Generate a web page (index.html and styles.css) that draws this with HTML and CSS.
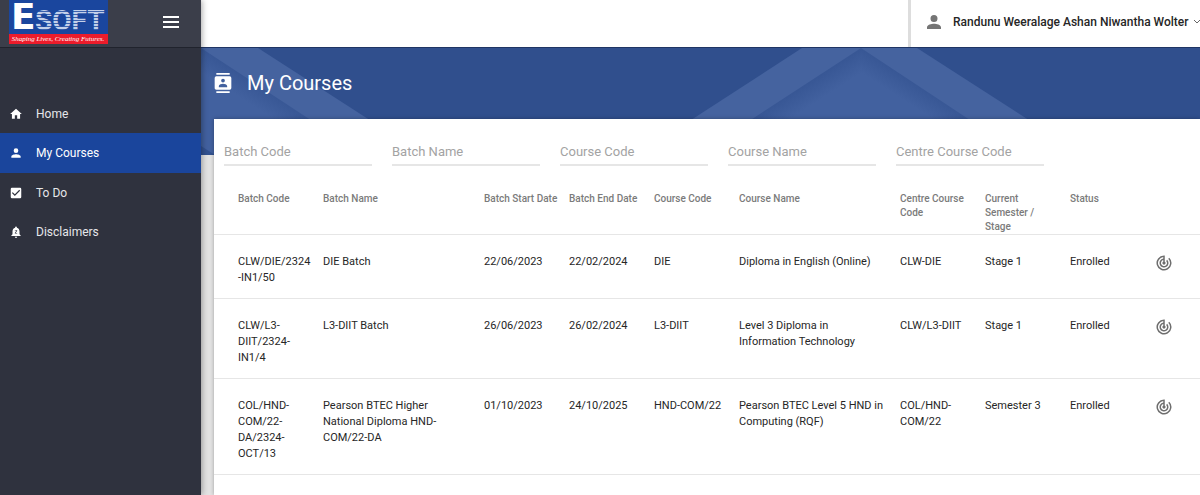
FILE: index.html
```html
<!DOCTYPE html>
<html lang="en">
<head>
<meta charset="utf-8">
<meta name="viewport" content="width=device-width, initial-scale=1">
<title>My Courses</title>
<link rel="stylesheet" href="styles.css">
</head>
<body>
<div class="app">
  <aside class="sidebar">
    <div class="brand">
      <svg class="logo" viewBox="0 0 99 44" role="img" aria-label="Esoft">
        <rect width="99" height="35" fill="#1a469e"/>
        <rect y="34" width="99" height="10" fill="#ec1c2b"/>
        <text class="logo-e" x="2" y="29">E</text>
        <text class="logo-soft" x="26" y="30">SOFT</text>
        <path d="M26 11.500H98M26 14.500H98M26 17.500H98M26 20.500H98M26 23.500H98M26 26.500H98M26 29.500H98" stroke="#1a469e" stroke-width="1" opacity=".8"/>
        <text class="logo-tag" x="49" y="41" text-anchor="middle">Shaping Lives, Creating Futures.</text>
      </svg>
      <button class="menu-button" type="button" aria-label="Toggle menu">
        <svg viewBox="0 0 16 12" width="16" height="12"><path d="M0 1h16M0 6h16M0 11h16" stroke="#fff" stroke-width="2"/></svg>
      </button>
    </div>
    <nav class="nav">
      <a class="nav-item" href="#home">
        <svg viewBox="0 0 24 24"><path d="M10 20v-6h4v6h5v-8h3L12 3 2 12h3v8z"/></svg>Home</a>
      <a class="nav-item active" href="#courses" aria-current="page">
        <svg viewBox="0 0 24 24"><path d="M12 12a4 4 0 1 0 0-8 4 4 0 0 0 0 8zm0 2c-2.700 0-8 1.300-8 4v2h16v-2c0-2.700-5.300-4-8-4z"/></svg>My Courses</a>
      <a class="nav-item" href="#todo">
        <svg viewBox="0 0 24 24"><path d="M19 3H5a2 2 0 0 0-2 2v14a2 2 0 0 0 2 2h14a2 2 0 0 0 2-2V5a2 2 0 0 0-2-2zm-9 14-5-5 1.400-1.400L10 14.200l7.600-7.600L19 8z"/></svg>To Do</a>
      <a class="nav-item" href="#disclaimers">
        <svg viewBox="0 0 24 24"><path fill-rule="evenodd" d="M12 22a2 2 0 0 0 2-2h-4a2 2 0 0 0 2 2zm6-6v-5c0-3.100-1.600-5.600-4.500-6.300V4a1.500 1.500 0 0 0-3 0v.7C7.600 5.400 6 7.900 6 11v5l-2 2v1h16v-1zM10 9h4v1l-2.500 3.500H14v1h-4v-1L12.500 10H10z"/></svg>Disclaimers</a>
    </nav>
  </aside>

  <div class="page">
    <header class="topbar">
      <button class="user" type="button">
        <svg class="user-icon" viewBox="4 4 16 16"><path d="M12 12a4 4 0 1 0 0-8 4 4 0 0 0 0 8zm0 2c-2.700 0-8 1.300-8 4v2h16v-2c0-2.700-5.300-4-8-4z"/></svg>
        <span class="user-name">Randunu Weeralage Ashan Niwantha Wolter</span>
        <svg class="chevron" viewBox="0 0 8 6"><path d="M1 1l3 3 3-3" fill="none" stroke="#666"/></svg>
      </button>
    </header>

    <main class="content">
      <div class="banner">
        <svg class="banner-art" viewBox="0 0 999 107" preserveAspectRatio="xMinYMin slice" aria-hidden="true">
          <defs>
            <linearGradient id="fade-left" gradientUnits="userSpaceOnUse" x1="54" y1="35" x2="43" y2="52"><stop offset="0" stop-color="#385795"/><stop offset="1" stop-color="#42619f"/></linearGradient>
            <linearGradient id="peak-left" gradientUnits="userSpaceOnUse" x1="606" y1="36" x2="617" y2="53"><stop offset="0" stop-color="#385795"/><stop offset="1" stop-color="#42619f"/></linearGradient>
            <linearGradient id="peak-right" gradientUnits="userSpaceOnUse" x1="715" y1="36" x2="704" y2="53"><stop offset="0" stop-color="#385795"/><stop offset="1" stop-color="#42619f"/></linearGradient>
          </defs>
          <path fill="#45639f" d="M0 0H57L223 107H0z"/>
          <path fill="url(#fade-left)" d="M0 0 163 107H0z"/>
          <path fill="#335290" d="M0 98 14 107H0z"/>
          <path fill="#45639f" d="M601 0H716L882 107H436z"/>
          <path fill="url(#peak-left)" d="M660 0V107H496z"/>
          <path fill="url(#peak-right)" d="M660 0 822 107H660z"/>
        </svg>
        <h1 class="title">
          <svg viewBox="0 0 24 24"><path fill-rule="evenodd" d="M20 0H4v2h16zM4 24h16v-2H4zM20 4H4a2 2 0 0 0-2 2v12c0 1.100.9 2 2 2h16a2 2 0 0 0 2-2V6a2 2 0 0 0-2-2zm-8 2.800a2.200 2.200 0 1 1 0 4.500 2.200 2.200 0 0 1 0-4.500zM17 17H7v-1.500c0-1.700 3.300-2.500 5-2.500s5 .8 5 2.500z"/></svg>
          My Courses
        </h1>
      </div>

      <section class="card">
        <form class="filters">
          <input type="text" placeholder="Batch Code" aria-label="Batch Code">
          <input type="text" placeholder="Batch Name" aria-label="Batch Name">
          <input type="text" placeholder="Course Code" aria-label="Course Code">
          <input type="text" placeholder="Course Name" aria-label="Course Name">
          <input type="text" placeholder="Centre Course Code" aria-label="Centre Course Code">
        </form>
        <table class="courses">
          <colgroup><col class="c-first"><col class="c-wide"><col class="c"><col class="c"><col class="c"><col class="c-wide"><col class="c"><col class="c"><col class="c"><col></colgroup>
          <thead>
            <tr><th>Batch Code</th><th>Batch Name</th><th>Batch Start Date</th><th>Batch End Date</th><th>Course Code</th><th>Course Name</th><th>Centre Course Code</th><th>Current Semester / Stage</th><th>Status</th><th aria-label="Track"></th></tr>
          </thead>
          <tbody>
            <tr><td>CLW/DIE/2324<br>-IN1/50</td><td>DIE Batch</td><td>22/06/2023</td><td>22/02/2024</td><td>DIE</td><td>Diploma in English (Online)</td><td>CLW-DIE</td><td>Stage 1</td><td>Enrolled</td><td><button class="track" type="button" aria-label="Track progress"><svg viewBox="0 0 24 24"><use href="#track"/></svg></button></td></tr>
            <tr><td>CLW/L3-<br>DIIT/2324-<br>IN1/4</td><td>L3-DIIT Batch</td><td>26/06/2023</td><td>26/02/2024</td><td>L3-DIIT</td><td>Level 3 Diploma in<br>Information Technology</td><td>CLW/L3-DIIT</td><td>Stage 1</td><td>Enrolled</td><td><button class="track" type="button" aria-label="Track progress"><svg viewBox="0 0 24 24"><use href="#track"/></svg></button></td></tr>
            <tr><td>COL/HND-<br>COM/22-<br>DA/2324-<br>OCT/13</td><td>Pearson BTEC Higher<br>National Diploma HND-<br>COM/22-DA</td><td>01/10/2023</td><td>24/10/2025</td><td>HND-COM/22</td><td>Pearson BTEC Level 5 HND in<br>Computing (RQF)</td><td>COL/HND-<br>COM/22</td><td>Semester 3</td><td>Enrolled</td><td><button class="track" type="button" aria-label="Track progress"><svg viewBox="0 0 24 24"><use href="#track"/></svg></button></td></tr>
          </tbody>
        </table>
      </section>
    </main>
  </div>
</div>
<svg class="symbols" aria-hidden="true"><symbol id="track" viewBox="0 0 24 24"><path d="M19.070 4.930l-1.410 1.410A8 8 0 1 1 11 4.070v2.020a6 6 0 1 0 5.240 1.670l-1.410 1.410A4 4 0 1 1 11 8.140v2.140a2 2 0 1 0 2 0V2h-1a10 10 0 1 0 7.070 2.930z"/></symbol></svg>
</body>
</html>
```
FILE: styles.css
```css
* { box-sizing: border-box; }
body {
  margin: 0;
  font-family: Roboto, "Liberation Sans", sans-serif;
  font-size: 12px;
  color: #262626;
  background: #e3e3e3;
}
button { border: 0; padding: 0; background: none; font: inherit; color: inherit; cursor: pointer; }
.app { display: flex; min-height: 100vh; }

.sidebar {
  flex: none;
  width: 201px;
  background: #2f323e;
  box-shadow: 1px 0 6px rgba(0, 0, 0, .35);
  z-index: 1;
}
.brand {
  display: flex;
  justify-content: space-between;
  align-items: flex-start;
  height: 48px;
  padding: 0 22px 0 9px;
  background: #3b3e4a;
  border-bottom: 1px solid #20232d;
}
.logo { width: 99px; height: 44px; overflow: visible; }
.logo text { fill: #fff; font-weight: 700; }
.logo .logo-e { font-family: "DejaVu Sans", sans-serif; font-size: 36px; }
.logo .logo-soft { font-family: Roboto, sans-serif; font-size: 28px; fill: #c3d0ea; }
.logo .logo-tag { font-family: "Liberation Serif", serif; font-style: italic; font-weight: 400; font-size: 7px; }
.menu-button { display: flex; padding: 16px 0 8px; }

.nav { padding-top: 46px; }
.nav-item {
  display: flex;
  align-items: center;
  gap: 13px;
  height: 39px;
  padding-left: 9px;
  color: #e6e7ea;
  text-decoration: none;
}
.nav-item svg { width: 14px; height: 14px; fill: #fff; }
.nav-item.active { height: 40px; background: #1a459c; color: #fff; }

.page { flex: 1; min-width: 0; display: flex; flex-direction: column; }
.topbar {
  display: flex;
  justify-content: flex-end;
  height: 48px;
  background: #fff;
  border-bottom: 1px solid #1f3564;
}
.user {
  display: flex;
  align-items: center;
  width: 292px;
  padding: 0 0 4px 16px;
  border-left: 3px solid #ddd;
  overflow: hidden;
}
.user-icon { flex: none; width: 14px; height: 14px; fill: #757575; }
.user-name { flex: none; margin: 0 4px 0 12px; font-weight: 500; white-space: nowrap; }
.chevron { flex: none; width: 8px; height: 6px; }

.content { flex: 1; display: flex; flex-direction: column; }
.banner { position: relative; height: 107px; background: #304f8d; overflow: hidden; }
.banner-art { position: absolute; inset: 0; width: 100%; height: 100%; }
.title {
  position: relative;
  display: flex;
  align-items: center;
  gap: 14px;
  margin: 0;
  padding: 23px 0 0 12px;
  font-size: 20px;
  line-height: 24px;
  font-weight: 400;
  color: #fff;
}
.title svg { width: 20px; height: 20px; fill: #fff; }

.card {
  position: relative;
  flex: 1;
  margin: -36px 0 0 13px;
  background: #fff;
  box-shadow: 0 0 4px rgba(0, 0, 0, .3);
}
.filters { display: flex; gap: 20px; padding: 20px 10px 0; }
.filters input {
  flex: 0 1 148px;
  min-width: 0;
  height: 27px;
  padding: 0;
  border: 0;
  border-bottom: 2px solid #e6e6e6;
  border-radius: 0;
  background: none;
  font: 13px/24px Roboto, "Liberation Sans", sans-serif;
}
.filters input::placeholder { color: #a3a3a3; opacity: 1; }

.courses {
  width: 100%;
  margin-top: 22px;
  border-collapse: separate;
  border-spacing: 0;
  table-layout: fixed;
}
.c-first { width: 109px; }
.c-wide { width: 161px; }
.c { width: 85px; }
.courses th, .courses td {
  padding: 0 8px 0 0;
  text-align: left;
  vertical-align: top;
  border-bottom: 1px solid #e6e6e6;
}
.courses th { padding: 4px 8px 0 0; font-size: 10px; line-height: 14px; font-weight: 500; color: #7b7b7b; }
.courses td { padding-top: 19px; padding-bottom: 12px; font-size: 11px; line-height: 16px; white-space: nowrap; }
.courses th:first-child, .courses td:first-child { padding-left: 24px; }
.courses th:nth-child(3), .courses th:nth-child(4) { padding-right: 0; }
.track { display: block; }
.track svg { display: block; width: 18px; height: 18px; fill: #6e6e6e; }
.symbols { position: absolute; width: 0; height: 0; overflow: hidden; }
```
